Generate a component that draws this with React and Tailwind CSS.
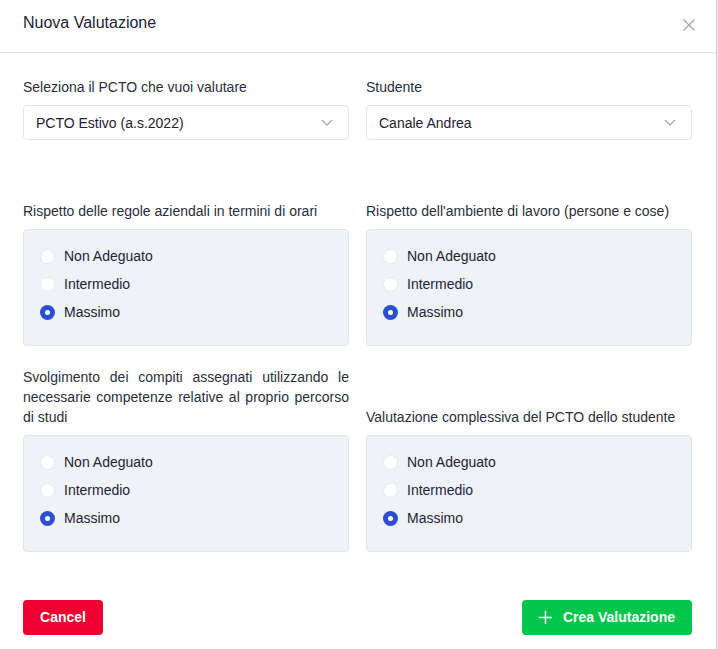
import React from "react";

function Radio({ checked, label }) {
  return (
    <div className="flex items-center h-[28px]">
      {checked ? (
        <span className="w-[15px] h-[15px] rounded-full bg-[#2a4fd0] flex items-center justify-center">
          <span className="w-[5px] h-[5px] rounded-full bg-white" />
        </span>
      ) : (
        <span className="w-[15px] h-[15px] rounded-full bg-white border border-[#e4e7ec]" />
      )}
      <span className="ml-[9px] text-[14px] text-[#1f2235]">{label}</span>
    </div>
  );
}

function RadioBox() {
  return (
    <div className="h-[117px] bg-[#eff3f8] border border-[#e1e6ec] rounded-[4px] pl-[16px] pt-[12px]">
      <Radio label="Non Adeguato" />
      <Radio label="Intermedio" />
      <Radio label="Massimo" checked />
    </div>
  );
}

function Select({ value }) {
  return (
    <div className="h-[35px] bg-white border border-[#e3e5e9] rounded-[4px] flex items-center justify-between pl-[12px] pr-[15px]">
      <span className="text-[14px] leading-[20px] pt-[1px] text-[#1f2235]">{value}</span>
      <svg width="12" height="7" viewBox="0 0 12 7" fill="none">
        <path d="M1 1l5 5 5-5" stroke="#a0a4ad" strokeWidth="1.2" />
      </svg>
    </div>
  );
}

export default function App() {
  return (
    <div
      className="w-[718px] h-[649px] bg-[#f0f0f0]"
      style={{ fontFamily: '"Liberation Sans", Arial, sans-serif' }}
    >
      <div className="w-[717px] h-[649px] bg-white border-r border-[#c9c9c9] flex flex-col">
        <div className="h-[53px] border-b border-[#e3e3e3] flex items-start justify-between pl-[23px] pr-[21px] pt-[13px]">
          <span className="text-[16px] leading-[20px] text-[#1f2235]">Nuova Valutazione</span>
          <svg className="mt-[6px]" width="12" height="12" viewBox="0 0 12 12" fill="none">
            <path d="M0.5 0.5l11 11M11.5 0.5l-11 11" stroke="#a3a3a3" strokeWidth="1.2" />
          </svg>
        </div>

        <div className="px-[23px] pt-[24px] grid grid-cols-2 gap-x-[17px] w-[715px]">
          <div>
            <div className="text-[14px] leading-[20px] text-[#2b2e3c] mb-[8px]">Seleziona il PCTO che vuoi valutare</div>
            <Select value="PCTO Estivo (a.s.2022)" />
          </div>
          <div>
            <div className="text-[14px] leading-[20px] text-[#2b2e3c] mb-[8px]">Studente</div>
            <Select value="Canale Andrea" />
          </div>

          <div className="mt-[61px]">
            <div className="text-[14px] leading-[20px] text-[#2b2e3c] mb-[8px]">Rispetto delle regole aziendali in termini di orari</div>
            <RadioBox />
          </div>
          <div className="mt-[61px]">
            <div className="text-[14px] leading-[20px] text-[#2b2e3c] mb-[8px]">Rispetto dell'ambiente di lavoro (persone e cose)</div>
            <RadioBox />
          </div>

          <div className="mt-[21px] flex flex-col justify-end">
            <div className="text-[14px] leading-[20px] text-[#2b2e3c] mb-[8px] text-justify">
              Svolgimento dei compiti assegnati utilizzando le necessarie competenze relative al proprio percorso di studi
            </div>
            <RadioBox />
          </div>
          <div className="mt-[21px] flex flex-col justify-end">
            <div className="text-[14px] leading-[20px] text-[#2b2e3c] mb-[8px]">Valutazione complessiva del PCTO dello studente</div>
            <RadioBox />
          </div>
        </div>

        <div className="px-[23px] pt-[48px] flex justify-between w-[715px]">
          <button className="h-[35px] w-[80px] rounded-[4px] bg-[#f00032] text-white text-[14px] font-bold flex items-center justify-center">
            Cancel
          </button>
          <button className="h-[35px] w-[170px] rounded-[4px] bg-[#00c74b] text-white text-[14px] font-bold flex items-center justify-center gap-[11px]">
            <svg width="13" height="13" viewBox="0 0 13 13" fill="none">
              <path d="M6.5 0v13M0 6.5h13" stroke="white" strokeWidth="1.5" />
            </svg>
            Crea Valutazione
          </button>
        </div>
      </div>
    </div>
  );
}
